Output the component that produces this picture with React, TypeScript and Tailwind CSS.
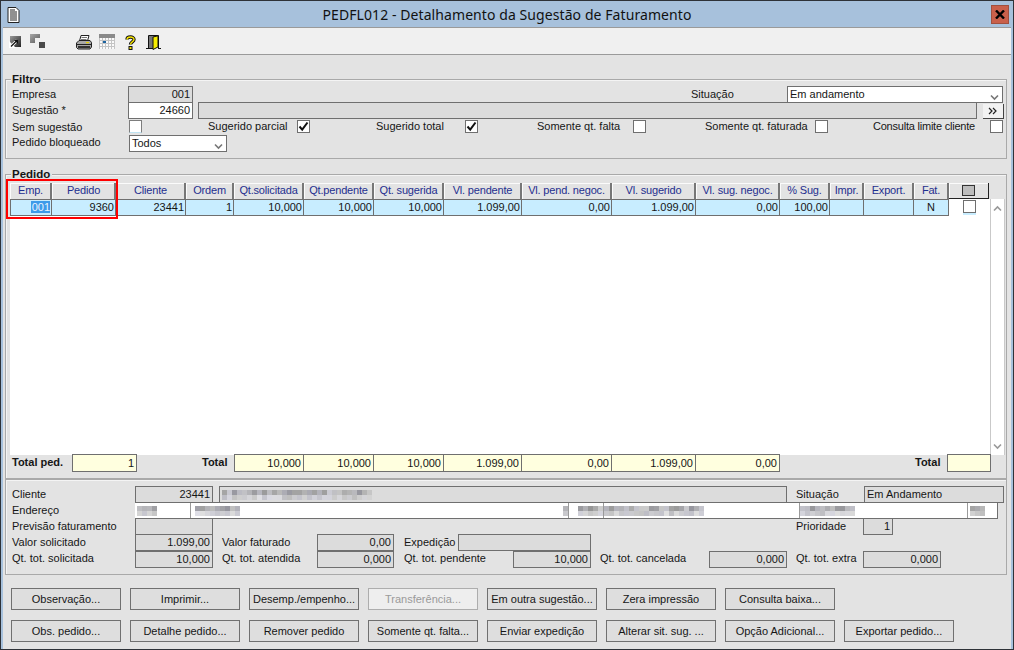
import React from "react";

const cols = [
  { h: "Emp.", v: "001" },
  { h: "Pedido", v: "9360" },
  { h: "Cliente", v: "23441" },
  { h: "Ordem", v: "1" },
  { h: "Qt.solicitada", v: "10,000" },
  { h: "Qt.pendente", v: "10,000" },
  { h: "Qt. sugerida", v: "10,000" },
  { h: "Vl. pendente", v: "1.099,00" },
  { h: "Vl. pend. negoc.", v: "0,00" },
  { h: "Vl. sugerido", v: "1.099,00" },
  { h: "Vl. sug. negoc.", v: "0,00" },
  { h: "% Sug.", v: "100,00" },
  { h: "Impr.", v: "" },
  { h: "Export.", v: "" },
  { h: "Fat.", v: "N" },
];

const gridCols = "grid grid-cols-[42px_64px_70px_48px_70px_70px_70px_78px_90px_84px_84px_50px_34px_50px_35px]";

function Field({ w, children, tone = "gray", align = "right" }: { w: string; children?: React.ReactNode; tone?: "gray" | "white"; align?: "right" | "left" }) {
  return (
    <div
      className={`${w} h-[17px] shrink-0 border border-[#6f6f6f] leading-[15px] px-[2px] whitespace-nowrap overflow-hidden ${tone === "gray" ? "bg-[#dcdcdc]" : "bg-white"} ${align === "right" ? "text-right" : "text-left"}`}
    >
      {children}
    </div>
  );
}

function Label({ w, ml, className, children }: { w: string; ml?: string; className?: string; children: React.ReactNode }) {
  return <div className={`${w} ${ml ?? ""} ${className ?? "pt-[1px]"} shrink-0 leading-[15px] whitespace-nowrap`}>{children}</div>;
}

function Check({ checked, ml, focus }: { checked?: boolean; ml?: string; focus?: boolean }) {
  return (
    <div className={`${ml ?? ""} w-[13px] h-[13px] mt-[1px] shrink-0 bg-white border ${focus ? "border-[#7d7d7d] border-b-[#bfe3f2]" : "border-[#6f6f6f]"} flex items-center justify-center`}>
      {checked && (
        <svg width="11" height="11" viewBox="0 0 11 11">
          <path d="M1.5 5.5 L4.2 8.6 L9.5 1.5" fill="none" stroke="#111" strokeWidth="2" />
        </svg>
      )}
    </div>
  );
}

function Chevron({ color = "#777" }: { color?: string }) {
  return (
    <svg width="9" height="7" viewBox="0 0 9 7">
      <path d="M1 1.5 L4.5 5 L8 1.5" fill="none" stroke={color} strokeWidth="1.6" />
    </svg>
  );
}

function Select({ w, children }: { w: string; children: React.ReactNode }) {
  return (
    <div className={`${w} h-[17px] shrink-0 border border-[#6f6f6f] bg-white flex items-center justify-between pl-[2px] pr-[3px]`}>
      <span className="leading-[15px]">{children}</span>
      <span className="mt-[5px] flex"><Chevron /></span>
    </div>
  );
}

function Mosaic({ w, seed = 1 }: { w: number; seed?: number }) {
  const rects: React.ReactNode[] = [];
  const step = 5;
  let s = seed * 7919;
  for (let r = 0; r < 2; r++) {
    for (let x = 0; x < w; x += step) {
      s = (s * 73 + 41) % 1009;
      const g = (r === 0 ? 150 : 190) + (s % (r === 0 ? 55 : 35));
      const c = `rgb(${g},${g},${g + (s % 3) * 4})`;
      rects.push(<rect key={`${r}-${x}`} x={x} y={r * 5} width={step} height={5} fill={c} />);
    }
  }
  return (
    <svg width={w} height="10" viewBox={`0 0 ${w} 10`} className="block shrink-0">
      {rects}
    </svg>
  );
}

function Group({ h, title, className, children }: { h: string; title?: string; className?: string; children: React.ReactNode }) {
  return (
    <div className={`relative w-[1002px] ${h} ml-[2px] border border-[#a9a9a9] shadow-[inset_1px_1px_0_#f4f4f4] ${className ?? ""}`}>
      {title && (
        <div className="absolute -top-[8px] left-[5px] bg-[#e3e3e3] pl-[1px] pr-[2px] font-bold leading-[14px] text-[11.5px]">{title}</div>
      )}
      {children}
    </div>
  );
}

function Btn({ children, disabled }: { children: React.ReactNode; disabled?: boolean }) {
  return (
    <div className={`w-[110px] h-[22px] shrink-0 border flex items-center justify-center whitespace-nowrap ${disabled ? "border-[#adadad] bg-[#eeeeee] text-[#9a9a9a]" : "border-[#707070] bg-[#dedede]"}`}>
      {children}
    </div>
  );
}

function DocIcon() {
  return (
    <svg width="13" height="16" viewBox="0 0 13 16">
      <path d="M1 .5 H9 L12 3.5 V15.5 H1 Z" fill="#fff" stroke="#222" />
      <path d="M3 3 H8 M3 5 H10 M3 7 H10 M3 9 H10 M3 11 H10 M3 13 H10" stroke="#222" strokeWidth="1" />
    </svg>
  );
}

function ArrowBoxIcon() {
  return (
    <svg width="12" height="12" viewBox="0 0 12 12">
      <defs>
        <linearGradient id="ab" x1="0" y1="0" x2="1" y2="1">
          <stop offset="0" stopColor="#9a9a9a" />
          <stop offset="1" stopColor="#222" />
        </linearGradient>
      </defs>
      <rect x="1" y="0" width="11" height="11" fill="url(#ab)" />
      <path d="M0 5 L0 12 L7 12 Z" fill="#fff" />
      <path d="M2 10.5 L8 4.5" stroke="#fff" strokeWidth="3" />
      <path d="M2 10.5 L7.5 5" stroke="#111" strokeWidth="1.3" />
      <path d="M5 4 H9 V8 Z" fill="#111" />
    </svg>
  );
}

function SquaresIcon() {
  return (
    <svg width="15" height="14" viewBox="0 0 15 14">
      <defs>
        <linearGradient id="sq" x1="0" y1="0" x2="1" y2="1">
          <stop offset="0" stopColor="#a8a8a8" />
          <stop offset="1" stopColor="#5a5a5a" />
        </linearGradient>
      </defs>
      <path d="M0 0 H10 V4 H5 V9 H0 Z" fill="url(#sq)" />
      <rect x="9" y="8" width="6" height="6" fill="#4a4a4a" />
    </svg>
  );
}

function PrinterIcon() {
  return (
    <svg width="16" height="15" viewBox="0 0 16 15">
      <path d="M5 .5 H13 L11.5 6 H3.5 Z" fill="#fff" stroke="#222" />
      <path d="M5.5 2.5 H11 M5 4.5 H10.5" stroke="#777" />
      <path d="M.5 8 L3 5.5 H14 L15.5 7.5 V12 L14 14 H2 L.5 12.5 Z" fill="#a8a8a8" stroke="#222" />
      <path d="M1 9.5 H15" stroke="#222" />
      <path d="M2 12 H14" stroke="#333" strokeWidth="2" />
      <rect x="10" y="7" width="3" height="1.2" fill="#e4d000" />
    </svg>
  );
}

function CalIcon() {
  return (
    <svg width="16" height="15" viewBox="0 0 16 15">
      <rect x="0" y="0" width="16" height="15" fill="#fafafa" />
      <rect x="0" y="0" width="16" height="4" fill="#8a8a8a" />
      <path d="M.5 4 V15 M3.5 4 V15 M6.5 4 V15 M9.5 4 V15 M12.5 4 V15 M15.5 4 V15 M0 6.5 H16 M0 9.5 H16 M0 12.5 H16" stroke="#c4c4c4" />
      <rect x="4" y="7" width="3" height="2" fill="#1e64a0" />
    </svg>
  );
}

function HelpIcon() {
  return (
    <svg width="11" height="15" viewBox="0 0 11 15">
      <path d="M2 4.5 C2 1.3 9 1 9 4.5 C9 6.8 5.5 7 5.5 9.5" fill="none" stroke="#111" strokeWidth="3.4" />
      <path d="M2 4.5 C2 1.3 9 1 9 4.5 C9 6.8 5.5 7 5.5 9.5" fill="none" stroke="#f6e400" strokeWidth="1.4" />
      <rect x="3.5" y="11" width="4" height="4" fill="#111" />
      <rect x="4.5" y="12" width="2" height="2" fill="#f6e400" />
    </svg>
  );
}

function DoorIcon() {
  return (
    <svg width="15" height="15" viewBox="0 0 15 15">
      <rect x="3" y="0" width="8" height="13" fill="#777" />
      <path d="M2.5 13 V.5 H12.5 V13" fill="none" stroke="#111" />
      <path d="M7 2 L12 .8 V12 L7 14.5 Z" fill="#f8ee00" stroke="#111" />
      <path d="M0 13.5 H7 M12 13.5 H15" stroke="#111" />
    </svg>
  );
}

export default function App() {
  return (
    <div className="w-[1014px] h-[650px] overflow-hidden border border-[#2e3238] bg-[#a7c1dc] font-['Liberation_Sans',sans-serif] text-[11px] text-[#161616]">
      <div className="h-full mx-[2px] mb-[3px] flex flex-col">
        {/* title bar */}
        <div className="h-[26px] shrink-0 flex items-center relative">
          <div className="ml-[4px] mt-[1px] flex"><DocIcon /></div>
          <div className="absolute inset-0 flex items-center justify-center font-['Noto_Sans',sans-serif] text-[14px] tracking-[0.08px] text-[#111]">
            PEDFL012 - Detalhamento da Sugestão de Faturamento
          </div>
          <div className="absolute right-[2px] top-[4px] w-[18px] h-[19px] bg-[#c9604b] border border-[#a0503f] flex items-center justify-center">
            <svg width="10" height="9" viewBox="0 0 10 9">
              <path d="M1 .5 L9 8.5 M9 .5 L1 8.5" stroke="#000" strokeWidth="2.4" />
            </svg>
          </div>
        </div>
        {/* toolbar */}
        <div className="h-[28px] shrink-0 bg-[#f0f0f0] border-y border-[#9a9a9a] flex items-start pt-[6px]">
          <div className="ml-[6px] mt-[2px] flex"><ArrowBoxIcon /></div>
          <div className="ml-[9px] flex"><SquaresIcon /></div>
          <div className="ml-[31px] mt-[1px] flex"><PrinterIcon /></div>
          <div className="ml-[7px] flex"><CalIcon /></div>
          <div className="ml-[10px] mt-[1px] flex"><HelpIcon /></div>
          <div className="ml-[10px] mt-[1px] flex"><DoorIcon /></div>
        </div>
        {/* content */}
        <div className="flex-1 bg-[#e3e3e3] pt-[24px] flex flex-col">
          <Group h="h-[80px]" title="Filtro" className="pt-[6px] pl-[6px]">
            <div className="flex h-[16px] items-start">
              <Label w="w-[116px]">Empresa</Label>
              <Field w="w-[65px]">001</Field>
              <Label w="w-[96px]" ml="ml-[498px]">Situação</Label>
              <Select w="w-[216px]">Em andamento</Select>
            </div>
            <div className="flex h-[17px] items-start">
              <Label w="w-[116px]">Sugestão *</Label>
              <Field w="w-[65px]" tone="white">24660</Field>
              <div className="ml-[5px]"><Field w="w-[779px]" /></div>
              <div className="ml-[6px] mt-[2px] w-[21px] h-[15px] bg-[#f2f2f2] border-r border-b border-[#444] flex items-center justify-center">
                <svg width="10" height="8" viewBox="0 0 10 8">
                  <path d="M1 1 L4 4 L1 7 M5 1 L8 4 L5 7" fill="none" stroke="#222" strokeWidth="1.2" />
                </svg>
              </div>
            </div>
            <div className="flex h-[16px] items-start">
              <Label w="w-[117px]">Sem sugestão</Label>
              <Check focus />
              <Label w="w-[89px]" ml="ml-[66px]" className="pt-0">Sugerido parcial</Label>
              <Check checked />
              <Label w="w-[89px]" ml="ml-[66px]" className="pt-0">Sugerido total</Label>
              <Check checked />
              <Label w="w-[96px]" ml="ml-[59px]" className="pt-0">Somente qt. falta</Label>
              <Check />
              <Label w="w-[110px]" ml="ml-[59px]" className="pt-0">Somente qt. faturada</Label>
              <Check />
              <Label w="w-[117px]" ml="ml-[45px]" className="pt-0 tracking-[-0.22px]">Consulta limite cliente</Label>
              <Check />
            </div>
            <div className="flex h-[17px] items-start">
              <Label w="w-[117px]" className="pt-0">Pedido bloqueado</Label>
              <Select w="w-[98px]">Todos</Select>
            </div>
          </Group>

          <Group h="h-[305px]" title="Pedido" className="mt-[15px] pt-[8px] pl-[4px]">
            <div className="absolute left-0 top-[4px] w-[112px] h-[40px] border-2 border-[#ff0000] z-10" />
            {/* header */}
            <div className="flex">
              <div className={gridCols}>
                {cols.map((c) => (
                  <div key={c.h} className="h-[16px] pl-[1px] bg-[#e3e3e3] border-r-2 border-[#777] shadow-[inset_1px_1px_0_#fbfbfb] text-[#1f2f8f] text-center leading-[15px] tracking-[-0.18px] whitespace-nowrap overflow-hidden">
                    {c.h}
                  </div>
                ))}
              </div>
              <div className="w-[40px] h-[16px] bg-[#e3e3e3] border-r border-b border-[#222] flex items-center justify-center shadow-[inset_1px_1px_0_#fbfbfb]">
                <div className="w-[13px] h-[11px] bg-[#bdbdbd] border border-[#333]" />
              </div>
            </div>
            {/* body */}
            <div className="flex">
              <div className="w-[980px] h-[256px] bg-white">
                <div className="flex">
                  <div className={gridCols}>
                    {cols.map((c, i) => (
                      <div
                        key={c.h}
                        className={`h-[17px] bg-[#c8edff] border-y border-r border-[#6f6f6f] leading-[15px] px-[1px] whitespace-nowrap overflow-hidden ${i === 14 ? "text-center" : "text-right"} ${i === 0 ? "border-l" : ""}`}
                      >
                        {i === 0 ? <span className="bg-[#3d9be9] text-[#e8f4ff] pl-[1px]">{c.v}</span> : c.v}
                      </div>
                    ))}
                  </div>
                  <div className="w-[40px] h-[17px] flex justify-center pt-[1px]">
                    <div className="w-[13px] h-[13px] bg-white border border-[#6f6f6f] shadow-[0_2px_0_#c8edff]" />
                  </div>
                </div>
              </div>
              <div className="w-[15px] h-[256px] bg-white border-x border-[#c9c9c9] flex flex-col justify-between items-center pt-[6px] pb-[5px]">
                <span className="flex rotate-180"><Chevron color="#999" /></span>
                <span className="flex"><Chevron color="#999" /></span>
              </div>
            </div>
            {/* totals */}
            <div className="flex items-start -mt-[1px]">
              <div className="ml-[2px] w-[60px] font-bold leading-[17px] whitespace-nowrap">Total ped.</div>
              <div className="w-[65px] h-[18px] border border-[#6f6f6f] bg-[#ffffdf] text-right pr-[2px] leading-[16px]">1</div>
              <div className="ml-[65px] w-[32px] font-bold leading-[17px]">Total</div>
              <div className="grid grid-cols-[70px_70px_70px_78px_90px_84px_84px]">
                {["10,000", "10,000", "10,000", "1.099,00", "0,00", "1.099,00", "0,00"].map((v, i) => (
                  <div key={i} className={`h-[18px] bg-[#ffffdf] border-y border-r border-[#6f6f6f] text-right pr-[2px] leading-[16px] ${i === 0 ? "border-l" : ""}`}>{v}</div>
                ))}
              </div>
              <div className="ml-[135px] w-[32px] font-bold leading-[17px]">Total</div>
              <div className="w-[44px] h-[18px] border border-[#6f6f6f] bg-[#ffffdf]" />
            </div>
          </Group>

          <Group h="h-[96px]" className="pt-[6px] pl-[6px]">
            <div className="flex h-[16px] items-start">
              <Label w="w-[123px]">Cliente</Label>
              <Field w="w-[78px]">23441</Field>
              <div className="ml-[6px] w-[568px] h-[17px] shrink-0 border border-[#6f6f6f] bg-[#dcdcdc] flex items-center pl-[2px]">
                <Mosaic w={150} seed={3} />
              </div>
              <Label w="w-[68px]" ml="ml-[9px]">Situação</Label>
              <Field w="w-[140px]" align="left">Em Andamento</Field>
            </div>
            <div className="flex h-[16px] items-start">
              <Label w="w-[123px]">Endereço</Label>
              <div className="w-[863px] h-[17px] shrink-0 border-y border-r border-[#6f6f6f] bg-white flex">
                <div className="w-[56px] h-full shrink-0 border-r border-[#9a9a9a] flex items-center pl-[2px]"><Mosaic w={20} seed={5} /></div>
                <div className="w-[378px] h-full shrink-0 border-r border-[#9a9a9a] flex items-center pl-[4px] justify-between">
                  <Mosaic w={45} seed={7} />
                  <Mosaic w={5} seed={2} />
                </div>
                <div className="w-[35px] h-full shrink-0 border-r border-[#9a9a9a] flex items-center justify-end"><Mosaic w={25} seed={11} /></div>
                <div className="w-[196px] h-full shrink-0 border-r border-[#9a9a9a] flex items-center"><Mosaic w={100} seed={13} /></div>
                <div className="w-[168px] h-full shrink-0 border-r border-[#9a9a9a] flex items-center"><Mosaic w={55} seed={17} /></div>
                <div className="flex-1 h-full flex items-center pl-[2px]"><Mosaic w={15} seed={19} /></div>
              </div>
            </div>
            <div className="flex h-[16px] items-start">
              <Label w="w-[123px]">Previsão faturamento</Label>
              <Field w="w-[78px]" />
              <Label w="w-[67px]" ml="ml-[583px]">Prioridade</Label>
              <Field w="w-[30px]">1</Field>
            </div>
            <div className="flex h-[17px] items-start">
              <Label w="w-[123px]">Valor solicitado</Label>
              <Field w="w-[78px]">1.099,00</Field>
              <Label w="w-[95px]" ml="ml-[9px]">Valor faturado</Label>
              <Field w="w-[77px]">0,00</Field>
              <Label w="w-[54px]" ml="ml-[10px]">Expedição</Label>
              <Field w="w-[133px]" />
            </div>
            <div className="flex h-[17px] items-start">
              <Label w="w-[123px]" className="pt-0">Qt. tot. solicitada</Label>
              <Field w="w-[78px]">10,000</Field>
              <Label w="w-[95px]" ml="ml-[9px]" className="pt-0">Qt. tot. atendida</Label>
              <Field w="w-[77px]">0,000</Field>
              <Label w="w-[109px]" ml="ml-[10px]" className="pt-0">Qt. tot. pendente</Label>
              <Field w="w-[78px]">10,000</Field>
              <Label w="w-[109px]" ml="ml-[9px]" className="pt-0">Qt. tot. cancelada</Label>
              <Field w="w-[78px]">0,000</Field>
              <Label w="w-[67px]" ml="ml-[9px]" className="pt-0">Qt. tot. extra</Label>
              <Field w="w-[78px]">0,000</Field>
            </div>
          </Group>

          <div className="pl-[8px] pt-[13px] flex flex-col gap-[10px]">
            <div className="flex gap-[9px]">
              <Btn>Observação...</Btn>
              <Btn>Imprimir...</Btn>
              <Btn>Desemp./empenho...</Btn>
              <Btn disabled>Transferência...</Btn>
              <Btn>Em outra sugestão...</Btn>
              <Btn>Zera impressão</Btn>
              <Btn>Consulta baixa...</Btn>
            </div>
            <div className="flex gap-[9px]">
              <Btn>Obs. pedido...</Btn>
              <Btn>Detalhe pedido...</Btn>
              <Btn>Remover pedido</Btn>
              <Btn>Somente qt. falta...</Btn>
              <Btn>Enviar expedição</Btn>
              <Btn>Alterar sit. sug. ...</Btn>
              <Btn>Opção Adicional...</Btn>
              <Btn>Exportar pedido...</Btn>
            </div>
          </div>
        </div>
      </div>
    </div>
  );
}
